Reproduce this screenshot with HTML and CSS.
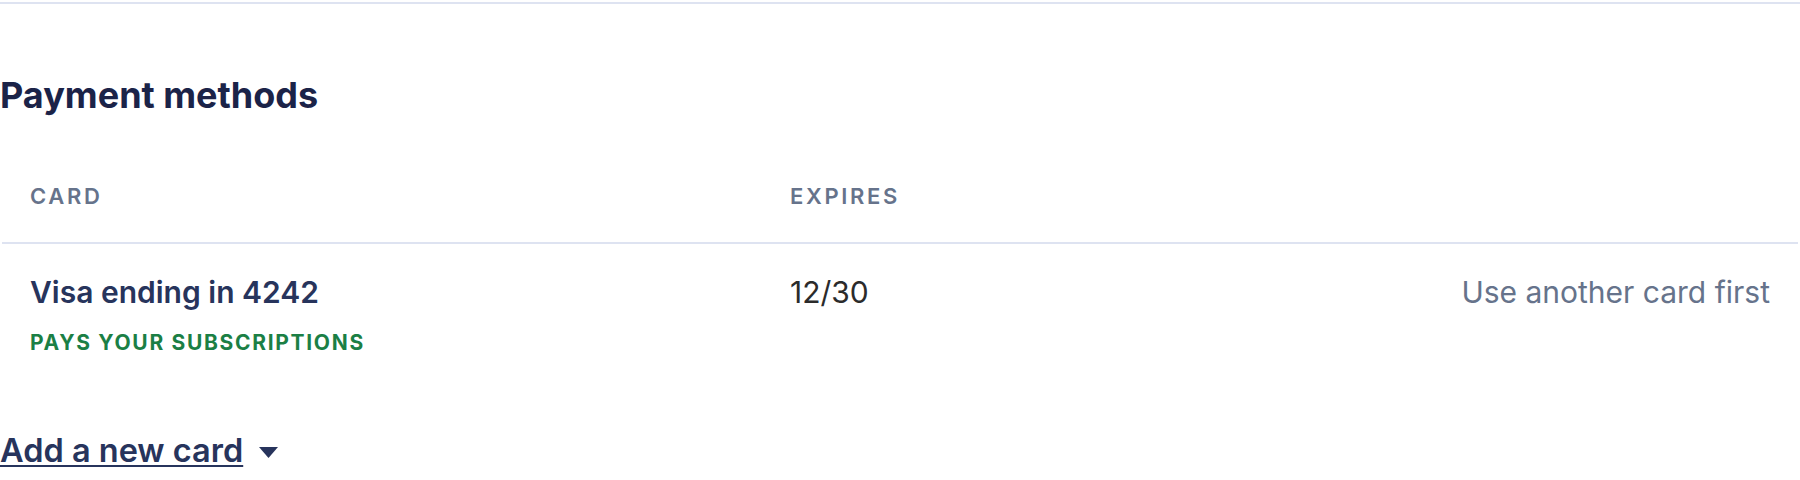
FILE: index.html
```html
<!DOCTYPE html>
<html lang="en">
<head>
    <meta charset="UTF-8">
    <meta name="viewport" content="width=device-width, initial-scale=1.0">
    <title>Payment methods</title>
    <link rel="stylesheet" href="styles.css">
</head>
<body>
    <div class="billing">
        <section class="payment-methods">
            <h2>Payment methods</h2>
            <table class="cards">
                <colgroup>
                    <col class="col-card">
                    <col class="col-expires">
                    <col>
                </colgroup>
                <thead>
                    <tr>
                        <th>Card</th>
                        <th>Expires</th>
                        <th></th>
                    </tr>
                </thead>
                <tbody>
                    <tr>
                        <td>
                            <div class="card-name">Visa ending in 4242</div>
                            <div class="card-badge">Pays your subscriptions</div>
                        </td>
                        <td class="expires">12/30</td>
                        <td class="card-action">Use another card first</td>
                    </tr>
                </tbody>
            </table>
            <a href="#" class="add-card">
                <span>Add a new card</span>
                <svg class="caret" width="19" height="11" viewBox="0 0 19 11" aria-hidden="true">
                    <path d="M0 0 H19 L9.5 11 Z" fill="currentColor"/>
                </svg>
            </a>
        </section>
    </div>
</body>
</html>
```

FILE: styles.css
```css
:root {
    --navy: #1b2348;
    --ink: #27345c;
    --muted: #66738b;
    --green: #1b7f45;
    --rule: #dee3f1;
}

* {
    margin: 0;
    padding: 0;
    box-sizing: border-box;
}

body {
    font-family: 'Inter', 'Noto Sans', sans-serif;
    background: #fff;
    color: #2b2b2b;
}

.billing {
    border-top: 2px solid var(--rule);
    margin-top: 2px;
}

.payment-methods h2 {
    margin-top: 70px;
    font-size: 36px;
    line-height: 1.2;
    font-weight: 700;
    color: var(--navy);
}

.cards {
    width: calc(100% - 4px);
    margin: 33px 2px 0;
    border-collapse: collapse;
    table-layout: fixed;
}

.col-card {
    width: 760px;
}

.col-expires {
    width: 500px;
}

.cards th {
    padding: 30px 28px 29px;
    font-size: 22px;
    line-height: 1.5;
    font-weight: 600;
    letter-spacing: 0.12em;
    text-transform: uppercase;
    text-align: left;
    color: var(--muted);
    border-bottom: 2px solid var(--rule);
}

.cards td {
    padding: 26px 28px 30px;
    vertical-align: top;
    font-size: 30px;
    line-height: 1.5;
}

.card-name {
    font-weight: 600;
    color: var(--ink);
}

.card-badge {
    margin-top: 12px;
    font-size: 21px;
    line-height: 1.5;
    font-weight: 700;
    letter-spacing: 0.08em;
    text-transform: uppercase;
    color: var(--green);
}

.cards .expires {
    color: #2b2b2b;
}

.cards .card-action {
    text-align: right;
    color: var(--muted);
}

.add-card {
    display: inline-flex;
    align-items: center;
    gap: 16px;
    margin-top: 38px;
    font-size: 32.5px;
    line-height: 1.5;
    font-weight: 600;
    color: var(--ink);
    text-decoration: none;
}

.add-card span {
    text-decoration: underline;
    text-decoration-thickness: 2px;
    text-underline-offset: 3px;
}

.caret {
    margin-top: 2px;
}
```
